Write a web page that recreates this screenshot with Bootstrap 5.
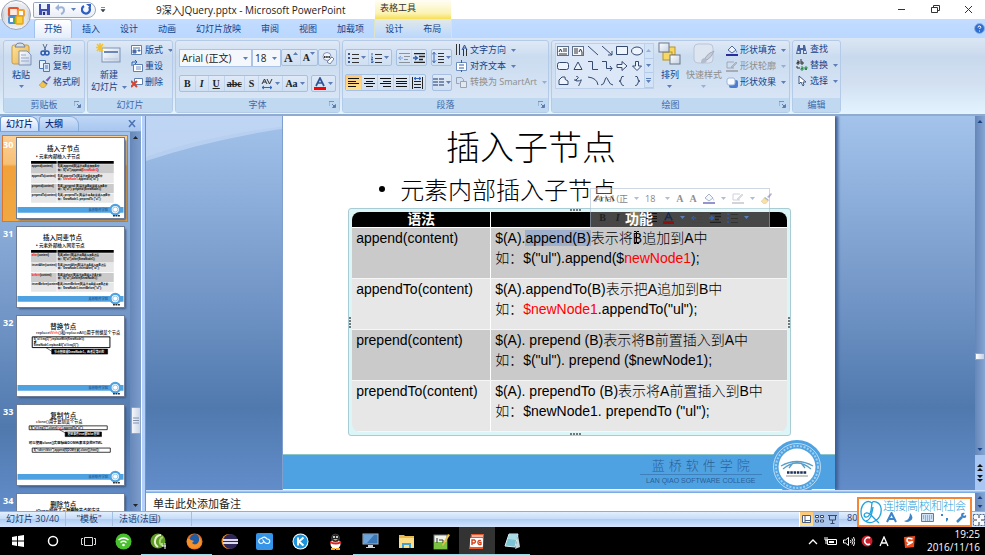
<!DOCTYPE html>
<html lang="zh-CN">
<head>
<meta charset="utf-8">
<meta name="viewport" content="width=device-width, initial-scale=1">
<title>9深入JQuery.pptx - Microsoft PowerPoint</title>
<link href="https://cdn.jsdelivr.net/npm/bootstrap@5.3.0/dist/css/bootstrap.min.css" rel="stylesheet">
<style>
:root{--ui:"Open Sans","Noto Sans CJK SC",sans-serif;--navy:#15428b;--line:#8db2e3}
body{font-family:var(--ui);font-size:9px;line-height:12px;color:var(--navy);height:100vh;overflow:hidden;background:#bfdbff}
svg{display:block;flex:none}
.btn{--bs-btn-padding-x:0;--bs-btn-padding-y:0;--bs-btn-font-size:9px;--bs-btn-line-height:12px;--bs-btn-border-width:0;--bs-btn-border-radius:2px;--bs-btn-color:var(--navy);--bs-btn-disabled-color:#8d8d8d;--bs-btn-disabled-opacity:1;white-space:nowrap;font-family:inherit}
.minh0{min-height:0}.minw0{min-width:0}
/* title bar */
.titlebar{height:19px;background:#fff;color:#222;flex:none}
.orb{position:absolute;left:0;top:0;z-index:5}
.quick{margin-left:33px;width:63px;height:16px;border:1px solid #9aa7ba;border-radius:2px 9px 9px 2px;background:linear-gradient(#fff,#e9eef6);padding:0 5px;gap:5px}
.doctitle{margin-left:50px;width:219px;font-size:10px;color:#222}
.ctx{width:76px;height:19px;padding:2px 5px;color:#333;background:linear-gradient(#fffef6,#fbf3b4 70%,#f7df54)}
.wins{gap:22px;padding-right:11px}
/* tabs */
.tabs{height:19px;padding-left:34px;background:linear-gradient(#c3dcff,#bad7ff);flex:none}
.tabs .btn{padding:0 10px;height:19px;border-radius:3px 3px 0 0}
.tabs .on{background:linear-gradient(#fff,#e3eefb);border:1px solid #a3c2ea;border-bottom:0;padding:0 9px;color:#15428b}
.ctxtabs{background:linear-gradient(#e2e9e8,#bad7ff);border-left:1px solid #dbe3c8;border-right:1px solid #dbe3c8}
/* ribbon */
.ribbon{height:78px;padding:2px 3px 1px;gap:2px;background:linear-gradient(#dbe6f4,#c9d9ed 25%,#d2e0f1 60%,#e3f4ff);border-bottom:2px solid #8fabd0;flex:none}
.grp{border:1px solid #b3cbe8;border-radius:3px;background:linear-gradient(#dfe9f6,#cbdcf0 22%,#d5e3f4 70%,#dbe8f7);overflow:hidden;flex:none}
.grp>.body{flex:1;padding:0 3px}
.grp>.body.pad2{padding:0 2px}
.cap{height:14px;background:#c1d8f1;color:#3e6aaa;line-height:14px;text-align:center;position:relative}
.cap svg{position:absolute;right:3px;top:3px}
.g1{width:82px}.g2{width:86px}.g3{width:165px}.g4{width:207px}.g5{width:239px}.g6{width:49px}
.a5{width:5px;height:3px;color:#5c7fb8}
.small-col{padding-top:1px}
.small-col .btn{height:16px;gap:2px;display:flex;align-items:center}
.small-col .a5{margin-left:3px}
.big{display:flex;flex-direction:column;align-items:center;padding-top:1px}
.big .btn-t{line-height:12px;padding-top:3px}
.big .arr{margin-top:4px}
.bgp{border:1px solid #a5c0e3;border-radius:2px;height:17px;background:linear-gradient(#dfe9f7,#cfdff2)}
.bgp .btn{height:15px;padding:0 2px;border-radius:0;border-right:1px solid #c0d3ec;display:flex;align-items:center;justify-content:center;gap:2px;flex:1}
.bgp .btn:last-child{border-right:0}
.hot{background:linear-gradient(#fcc87a,#ffe08a)}
.rows{gap:8px}
.grp>.rows,.grp .body>.rows{padding-top:8px}
.ff{height:18px;border:1px solid #abc4e6;background:#f4f8fd;border-radius:0;color:#222;font-size:10px;line-height:14px;padding:1px 2px;appearance:none;background-image:none}
.ffname{width:73px}.ffsize{width:29px}
.selw{position:relative}.selw svg{position:absolute;right:4px;top:8px;pointer-events:none}
.gal{width:99px;height:46px;border:1px solid #bcd0ea;background:#dce8f7;margin-top:2px}
.gal .cells{display:grid;grid-template-columns:repeat(6,1fr);flex:1}
.gal .cells .btn{display:flex;align-items:center;justify-content:center}
.gal .rail{width:9px;border-left:1px solid #bcd0ea}
.gal .rail .btn{flex:1;display:flex;align-items:center;justify-content:center;background:#d3e3f7;border-bottom:1px solid #b3cbe8;border-radius:0}
.serif,.bgp .serif{font-family:"Liberation Serif",serif;font-weight:700;font-size:10px;color:#222;line-height:12px}
.bgp .serif.lg{font-size:12px;gap:0}
.bgp .serif.sm{font-size:10px;gap:0}
/* work area */
.blue{background:linear-gradient(#a3c3eb,#7094c5 50%,#5079ae 78%,#628dc9)}
.left{width:141px}
.ltabs{height:16px;background:linear-gradient(#bfd7f7,#a9c6ef);border-bottom:1px solid #7fa5d8}
.ltabs .btn{height:15px;padding:0 5px;color:#0b2a78;border-radius:3px 9px 0 0;font-weight:500}
.ltabs .on{background:linear-gradient(#fff,#c7dcfa);border:1px solid #6f99d3;border-bottom:0}
.ltabs .off{background:linear-gradient(#d4e4fb,#a8c6f0);border:1px solid #89add9;border-bottom:0;padding-right:15px}
.thumbs{padding:3px 0 0 2px;gap:2px;overflow:hidden}
.th{width:126px;height:87px;padding:2px 0 0;border:1px solid transparent;flex:none;--bs-btn-color:#fff;display:flex;align-items:flex-start;border-radius:0;text-align:left}
.th .no{width:14px;line-height:14px;font-size:9px;font-weight:700;color:#fff}
.th svg{background:#fff;outline:1px solid #6d7c94;box-shadow:2px 2px 2px #3c567f}
.th.sel{background:linear-gradient(#fbcf95,#f7c076 33%,#f0a13a 36%,#f1a842);border:1px solid #d9762a}
.sb{width:11px;background:linear-gradient(90deg,#6688b9,#7c9dcc);flex:none}
.sb .thumbbar{width:10px;height:27px;margin-top:264px;background:linear-gradient(90deg,#f4f7fc,#ccd6e8);border:1px solid #8fa3c4;border-radius:1px}
.split{width:5px;background:linear-gradient(90deg,#fff 1px,#b2d0fa 1px,#b2d0fa 4px,#6c94cc 4px)}
.stage{position:relative;overflow:hidden;padding-right:4px}
.swoosh{position:absolute;left:0;top:0}
.slide{width:67%;position:relative;background:#fff;color:#000;z-index:1;box-shadow:3px 0 3px #3d5f95;border-left:1px solid #7f9fce;overflow:hidden}
.slide h1{font-family:"Noto Sans CJK SC",sans-serif;font-weight:300;font-size:34px;line-height:42px;text-align:center;padding:9px 56px 0 0;margin:0}
.slide h2{font-family:"Noto Sans CJK SC",sans-serif;font-weight:300;font-size:24px;line-height:30px;margin:7px 0 4px;padding-left:96px;gap:15px}
.dot{width:6px;height:6px;border-radius:50%;background:#000}
.frame{margin:0 44px 0 65px;padding:3px;border:1px solid #a9ccd4;background:#dcf5f7;border-radius:3px;position:relative}
.frame table{margin:0;width:100%;font-family:"Liberation Sans","Noto Sans CJK SC",sans-serif;font-size:14px;line-height:20px;color:#000;border-collapse:separate;border-spacing:0;table-layout:fixed;border-radius:8px;overflow:hidden}
.frame th{height:16px;padding:0;background:#000;color:#fff;text-align:center;line-height:15px;border:0;border-bottom:1px solid #fff}
.frame th span{position:relative;z-index:3}
.frame td{height:51px;padding:0 0 0 4px;vertical-align:top;border:0;border-bottom:1px solid #f6f6f6;background:#cacaca;white-space:nowrap;font-weight:400}
.frame tr:nth-child(even) td{background:#e7e7e7}
.frame th:first-child,.frame td:first-child{width:139px;border-right:1px solid #fff}
.han{font-weight:300}
.red{color:#f00}
.pick{background:#9fb0cc}
.grip{position:absolute;width:12px;height:2px;background:repeating-linear-gradient(90deg,#777 0 2px,transparent 2px 3px);left:50%}
.gripv{position:absolute;width:2px;height:12px;background:repeating-linear-gradient(#777 0 2px,transparent 2px 3px);top:48%}
.foot{background:#4fa2e2;height:35px;margin-bottom:1px;border-top:1px solid #8cc6c9;color:#2c5e94;text-align:center;padding-right:73px}
.foot .cn{font-size:13px;line-height:19px;border-bottom:1px solid #3f80bd;padding:0 12px;font-family:"Noto Sans CJK SC",sans-serif;font-weight:300;display:flex;gap:4px}
.foot .en{font-family:"Liberation Sans",sans-serif;font-size:7px;line-height:11px}
.seal{position:absolute;right:10px;bottom:-5px}
.mini{position:absolute;left:307px;top:72px;width:180px;height:40px;background:rgba(255,255,255,.28);border:1px solid rgba(160,175,200,.5);z-index:2;white-space:nowrap}
.mini>div{height:19px;gap:6px;padding:0 4px}
.mini .hot{width:15px;height:14px;opacity:.35}
.caret{position:absolute;left:350px;top:115px}
.vs{width:10px;background:linear-gradient(90deg,#6486b8,#86a5d2);flex:none}
.vs .track{flex:1;padding-top:230px}
.vs .knob{height:7px;background:linear-gradient(90deg,#fff,#c3d0e6);border:1px solid #8da2c6}
.vs .nav2{background:#a7c6f2;height:35px}
.notes{height:18px;background:#fff;border:0;resize:none;font-size:11px;line-height:16px;padding:3px 7px 0;color:#111;border-radius:0;overflow:hidden;flex:1;font-family:var(--ui)}
.notes::placeholder{color:#222;opacity:1}
.hsplit{height:3px;background:linear-gradient(#e7f1ff,#b0cffb 1px,#6b9edc)}
/* status bar */
.status{height:16px;background:linear-gradient(#e3effe,#c5dcf8 45%,#aecdf5 50%,#d4e5fb);border-top:1px solid #93acd0;color:#1c3c72}
.status .cell{border-right:1px solid #a3bfe4;height:14px;line-height:14px}
.c1{width:66px;padding-left:6px}.c2{width:47px;text-align:center}.c3{width:79px;padding-left:6px}.zoomv{width:134px}
.views{border-left:1px solid #fff;background:#a9c4ea}
.views .btn{width:13px;height:14px;display:flex;align-items:center;justify-content:center;border-radius:0}
.ime{position:absolute;right:13px;bottom:28px;width:115px;height:30px;border:2px solid #f58733;background:#fff;z-index:6}
.ime .words{font-size:11px;line-height:13px;color:#1da0dc;font-weight:300}
.ime .words span+span{border-left:1px solid #a8d8ee}
/* task bar */
.task{height:28px;background:#000;color:#fff}
.apps{width:530px}
.apps .btn{flex:1;display:flex;align-items:center;justify-content:center;border-radius:0;height:28px}
.apps .run{box-shadow:inset 0 -1px #9adbe8}
.apps .cur{background:#333}
.tray{gap:6px;padding-right:5px}
.clock{font-size:10px;text-align:right;width:58px}
.clock div{line-height:13px}
</style>
<script src="https://cdn.jsdelivr.net/npm/bootstrap@5.3.0/dist/js/bootstrap.bundle.min.js"></script>
</head>
<body class="d-flex flex-column m-0 position-relative">
<svg width="0" height="0" class="position-absolute" aria-hidden="true">
<defs>
<linearGradient id="gOrb" x1="0" y1="0" x2="0" y2="1"><stop offset="0" stop-color="#fff"/><stop offset=".5" stop-color="#c8ccd4"/><stop offset="1" stop-color="#f3f5f8"/></linearGradient>
<linearGradient id="gPage" x1="0" y1="0" x2="1" y2="1"><stop offset="0" stop-color="#fff"/><stop offset="1" stop-color="#c3d0e4"/></linearGradient>
<linearGradient id="gBrown" x1="0" y1="0" x2="1" y2="1"><stop offset="0" stop-color="#fce29b"/><stop offset="1" stop-color="#eab44e"/></linearGradient>
<symbol id="arr" viewBox="0 0 5 3"><path d="M0 0h5L2.500 3z" fill="currentColor"/></symbol>
<symbol id="up" viewBox="0 0 5 3"><path d="M0 3h5L2.500 0z" fill="currentColor"/></symbol>
<symbol id="launch" viewBox="0 0 7 7"><path d="M0 5V.5h5" fill="none" stroke="#7693bd"/><path d="M3 3l3 3M6.500 3.500v3h-3z" stroke="#5b7db2" fill="#5b7db2"/></symbol>
<symbol id="bul" viewBox="0 0 11 10"><path d="M0 0h2v2H0zM0 4h2v2H0zM0 8h2v2H0z" fill="#36528f"/><path d="M4 1.500h7M4 5.500h7M4 9.500h7" stroke="#333"/></symbol>
<symbol id="num" viewBox="0 0 11 10"><path d="M1 0v2.500M0 4h1.500v1L0 6.500h2M0 8h2v1.500H0" stroke="#3b68b4" fill="none"/><path d="M4 1.500h7M4 5.500h7M4 9.500h7" stroke="#333"/></symbol>
<symbol id="ind" viewBox="0 0 12 10"><path d="M1 .5h11M6 3.500h6M6 6.500h4M1 9.500h11" stroke="#222" stroke-width="1.300"/><path d="M0 5h4M2 3l2.500 2L2 7" fill="none" stroke="#2f62b5" stroke-width="1.300"/></symbol>
<symbol id="outd" viewBox="0 0 12 10"><path d="M1 .5h11M6 3.500h6M6 6.500h4M1 9.500h11" stroke="#444"/><path d="M5 5H1M3 3L.5 5 3 7" fill="none" stroke="#2f62b5"/></symbol>
<symbol id="al" viewBox="0 0 11 9"><path d="M0 .5h11M0 3.500h8M0 5.500h11M0 8.500h8" stroke="#111"/></symbol>
<symbol id="ac" viewBox="0 0 11 9"><path d="M0 .5h11M2 3.500h7M0 5.500h11M2 8.500h7" stroke="#111"/></symbol>
<symbol id="ar" viewBox="0 0 11 9"><path d="M0 .5h11M3 3.500h8M0 5.500h11M3 8.500h8" stroke="#111"/></symbol>
<symbol id="aj" viewBox="0 0 11 9"><path d="M0 .5h11M0 3.500h11M0 5.500h11M0 8.500h11" stroke="#111"/></symbol>
<symbol id="brush" viewBox="0 0 11 11"><path d="M6 4l4-4 1 1-3 4z" fill="#7a5fb5"/><path d="M4 4l4 3-1 1-4-3z" fill="#4a69a8"/><path d="M3 5l4 3c-1 2-3 3-4 3L0 8c1 0 2-1 3-3z" fill="#f1c44c" stroke="#b98a28" stroke-width=".5"/></symbol>
<symbol id="bucket" viewBox="0 0 12 11"><path d="M2 5l4-4 4 4-4 3z" fill="#eef3fb" stroke="#4c6a9a"/><path d="M10 5q2 2 1 3q-1-1-1-3" fill="#4c7cc8"/><path d="M0 9h12v2H0z" fill="#2b2ba0"/></symbol>
<symbol id="pen" viewBox="0 0 12 11"><path d="M1 1h7M1 1v6h7" fill="none" stroke="#a0a8b5"/><path d="M5 6l5-5 1 1-5 5z" fill="#b8bec8" stroke="#8b94a3" stroke-width=".5"/><path d="M0 9h12v2H0z" fill="#a6abb5"/></symbol>
<symbol id="sfoot" viewBox="0 0 556 418"><path d="M0 360h556v30H0z" fill="#4fa2e2"/><text x="372" y="382" font-size="17" fill="#2c5e94" font-family="Noto Sans CJK SC">蓝桥软件学院</text><circle cx="512" cy="374" r="25" fill="#fff" stroke="#4fa2e2" stroke-width="12"/><circle cx="512" cy="374" r="13" fill="none" stroke="#76b5e4" stroke-width="4"/><path d="M500 406h36" stroke="#333" stroke-width="8" stroke-dasharray="10 3"/></symbol>
</defs>
</svg>

<!-- office button -->
<button class="btn orb" aria-label="Office"><svg width="31" height="31" viewBox="0 0 31 31"><circle cx="16" cy="15" r="14.500" fill="url(#gOrb)" stroke="#9aa5b6"/><circle cx="16" cy="15" r="12" fill="#e6e8ec" opacity=".7"/><rect x="9" y="8" width="9" height="8" rx="1" fill="#fbe9e2" stroke="#e3562b" stroke-width="2.200"/><rect x="18" y="10" width="6" height="6" rx="1" fill="#fff" stroke="#f4a02c" stroke-width="2"/><rect x="9" y="17" width="7" height="6" rx="1" fill="#fff" stroke="#4a8fd6" stroke-width="2"/><rect x="16" y="16" width="7" height="8" rx="1" fill="#f7d03c" stroke="#e5a51f" stroke-width="1.500"/><path d="M14 18v5" stroke="#66ad3c" stroke-width="2"/></svg></button>

<header class="titlebar d-flex align-items-center">
  <div class="quick d-flex align-items-center">
    <button class="btn" aria-label="保存"><svg width="11" height="11" viewBox="0 0 11 11"><path d="M0 0h11v11H0z" fill="#3e4fb0"/><path d="M2 0h6v5H2z" fill="#eaf2fd"/><path d="M3 7h5v4H3z" fill="#c7d1ee"/><path d="M4 8h2v3H4z" fill="#2a2f80"/></svg></button>
    <button class="btn" aria-label="撤消"><svg width="11" height="11" viewBox="0 0 11 11"><path d="M3 4q6-2 6 2q0 3-3 4" fill="none" stroke="#9db3d6" stroke-width="2"/><path d="M0 4l4-4v7z" fill="#9db3d6"/></svg></button>
    <svg class="a5"><use href="#arr"/></svg>
    <button class="btn" aria-label="恢复"><svg width="11" height="11" viewBox="0 0 11 11"><path d="M3 2a4 4 0 1 0 5 1" fill="none" stroke="#2f5fc4" stroke-width="2.300"/><path d="M5 0h5v4z" fill="#2f5fc4"/></svg></button>
  </div>
  <button class="btn ms-1" aria-label="自定义"><svg width="6" height="6" viewBox="0 0 6 6"><path d="M1 .5h4M1 2.500h4L3 5z" stroke="#345" fill="#345" stroke-width=".6"/></svg></button>
  <div class="doctitle text-nowrap">9深入JQuery.pptx - Microsoft PowerPoint</div>
  <div class="ctx">表格工具</div>
  <div class="wins d-flex align-items-center ms-auto">
    <button class="btn" aria-label="最小化"><svg width="11" height="11" viewBox="0 0 11 11"><path d="M1 5.500h7" stroke="#333"/></svg></button>
    <button class="btn" aria-label="还原"><svg width="11" height="11" viewBox="0 0 11 11"><path d="M3.500 3.500V1.500h6v5h-2M1.500 3.500h6v5h-6z" fill="none" stroke="#333"/></svg></button>
    <button class="btn" aria-label="关闭"><svg width="11" height="11" viewBox="0 0 11 11"><path d="M2 2l7 7M9 2l-7 7" stroke="#333"/></svg></button>
  </div>
</header>

<nav class="tabs d-flex">
  <button class="btn on">开始</button><button class="btn">插入</button><button class="btn">设计</button><button class="btn">动画</button><button class="btn">幻灯片放映</button><button class="btn">审阅</button><button class="btn">视图</button><button class="btn">加载项</button>
  <div class="ctxtabs d-flex"><button class="btn">设计</button><button class="btn">布局</button></div>
  <button class="btn ms-auto px-0" aria-label="帮助"><svg width="11" height="11" viewBox="0 0 11 11"><circle cx="5.500" cy="5.500" r="5" fill="#2f6ed0" stroke="#8fb4e8"/><path d="M4 4.500q0-2 2-1.500q2 1-.5 3M5.500 7.500v1" fill="none" stroke="#fff"/></svg></button>
</nav>

<section class="ribbon d-flex">
  <!-- clipboard -->
  <div class="grp g1 d-flex flex-column"><div class="body d-flex">
    <button class="btn big me-1"><svg width="28" height="24" viewBox="0 0 28 24"><rect x="5" y="3" width="17" height="19" rx="2" fill="url(#gBrown)" stroke="#c89a4a"/><path d="M9 3q0-2 4-2t4 2l1 2H8z" fill="#d9dfe9" stroke="#77839a"/><path d="M12 9h8l4 4v10H12z" fill="url(#gPage)" stroke="#7d93b8"/><path d="M14 13h5M14 16h8M14 19h8" stroke="#93a9cc"/></svg><span class="btn-t">粘贴</span><svg class="arr a5"><use href="#arr"/></svg></button>
    <div class="small-col">
      <button class="btn"><svg width="12" height="12" viewBox="0 0 12 12"><path d="M4 0l3 7M8 0L5 7" stroke="#5c6f90"/><circle cx="4" cy="9" r="2" fill="none" stroke="#2c5cb0" stroke-width="1.500"/><circle cx="8" cy="9" r="2" fill="none" stroke="#2c5cb0" stroke-width="1.500"/></svg>剪切</button>
      <button class="btn"><svg width="12" height="12" viewBox="0 0 12 12"><path d="M.5.500h6v8h-6z" fill="#eaf2fd" stroke="#4e77ba"/><path d="M4.500 3.500h6v8h-6z" fill="#d8e6fa" stroke="#4e77ba"/><path d="M6 6h3M6 8h3" stroke="#4e77ba"/></svg>复制</button>
      <button class="btn"><svg width="12" height="12"><use href="#brush"/></svg>格式刷</button>
    </div></div>
    <div class="cap">剪贴板<svg width="7" height="7"><use href="#launch"/></svg></div>
  </div>
  <!-- slides -->
  <div class="grp g2 d-flex flex-column"><div class="body d-flex">
    <button class="btn big me-1"><svg width="28" height="24" viewBox="0 0 28 24"><rect x="7" y="6" width="18" height="14" fill="url(#gPage)" stroke="#7d93b8"/><path d="M9 10h14" stroke="#6a86b5" stroke-width="2"/><path d="M9 17h14" stroke="#b9c7de"/><path d="M5 1v9M1 5.500h9M2 2l6 7M8 2L2 9" stroke="#f4c22c" stroke-width="1.500"/></svg><span class="btn-t">新建</span><span class="d-flex align-items-center gap-1">幻灯片<svg class="a5"><use href="#arr"/></svg></span></button>
    <div class="small-col">
      <button class="btn"><svg width="12" height="12" viewBox="0 0 12 12"><path d="M.5 1.500h10v9H.500z" fill="#fff" stroke="#5f7fae"/><path d="M2 4h7M2 6h3v3H2zM7 6h2v1H7z" stroke="#4a6da8" fill="#4a6da8"/></svg>版式<svg class="a5"><use href="#arr"/></svg></button>
      <button class="btn"><svg width="12" height="12" viewBox="0 0 12 12"><path d="M2.500 4.500h9v7h-9z" fill="#fff" stroke="#5f7fae"/><path d="M5 7h5M5 9h5" stroke="#6d8fc4"/><path d="M1 6V2h5M4 0l2 2-2 2" fill="none" stroke="#2d62ba"/></svg>重设</button>
      <button class="btn"><svg width="12" height="12" viewBox="0 0 12 12"><path d="M3.500 2.500h8v6h-8z" fill="#fff" stroke="#5f7fae"/><path d="M0 5l6 6M6 5l-6 6" stroke="#d9442d" stroke-width="2"/></svg>删除</button>
    </div></div>
    <div class="cap">幻灯片</div>
  </div>
  <!-- font -->
  <div class="grp g3 d-flex flex-column"><div class="body rows d-flex flex-column">
    <div class="d-flex justify-content-between">
      <div class="d-flex"><span class="selw"><select class="ff ffname" aria-label="字体"><option>Arial (正文)</option></select><svg class="a5"><use href="#arr"/></svg></span><span class="selw"><select class="ff ffsize" aria-label="字号"><option>18</option></select><svg class="a5"><use href="#arr"/></svg></span></div>
      <div class="bgp d-flex"><button class="btn serif lg" aria-label="增大字号">A<svg class="a5 mb-2"><use href="#up"/></svg></button><button class="btn serif sm" aria-label="减小字号">A<svg class="a5 mb-2"><use href="#arr"/></svg></button></div>
      <div class="bgp d-flex"><button class="btn" aria-label="清除格式"><svg width="13" height="12" viewBox="0 0 13 12"><circle cx="6" cy="4.500" r="4" fill="#f4f7fc" stroke="#8495b5"/><path d="M3 5h6" stroke="#333" stroke-width="2" stroke-dasharray="1.500 .7"/><path d="M6 10l5-5 2 2-4 5z" fill="#fff" stroke="#7183a5"/></svg></button></div>
    </div>
    <div class="d-flex justify-content-between">
      <div class="bgp d-flex"><button class="btn serif px-1">B</button><button class="btn serif px-1"><i>I</i></button><button class="btn serif px-1"><u>U</u></button><button class="btn serif"><s>abc</s></button><button class="btn serif px-1">S</button><button class="btn" aria-label="字符间距"><svg width="12" height="12" viewBox="0 0 12 12"><path d="M1 6l2.500-5L6 6M2 4h3M6 1l2.500 5L11 1" fill="none" stroke="#333"/><path d="M1 9.500h10M3 8L1 9.500 3 11M9 8l2 1.500L9 11" fill="none" stroke="#2e66c0"/></svg><svg class="a5"><use href="#arr"/></svg></button><button class="btn serif">Aa<svg class="a5"><use href="#arr"/></svg></button></div>
      <div class="bgp d-flex"><button class="btn" aria-label="字体颜色"><svg width="12" height="13" viewBox="0 0 12 13"><path d="M2 9l4-8 4 8M4 6h4" fill="none" stroke="#2f5496" stroke-width="1.700"/><path d="M0 10h12v3H0z" fill="#f00"/></svg><svg class="a5"><use href="#arr"/></svg></button></div>
    </div></div>
    <div class="cap">字体<svg width="7" height="7"><use href="#launch"/></svg></div>
  </div>
  <!-- paragraph -->
  <div class="grp g4 d-flex flex-column"><div class="body pad2 d-flex">
    <div class="rows d-flex flex-column">
      <div class="d-flex gap-1">
        <div class="bgp d-flex"><button class="btn" aria-label="项目符号"><svg width="11" height="10"><use href="#bul"/></svg><svg class="a5"><use href="#arr"/></svg></button><button class="btn" aria-label="编号"><svg width="11" height="10"><use href="#num"/></svg><svg class="a5"><use href="#arr"/></svg></button></div>
        <div class="bgp d-flex"><button class="btn px-0 opacity-50" aria-label="减少缩进"><svg class="mx-auto" width="14" height="10"><use href="#outd"/></svg></button><button class="btn px-0" aria-label="增加缩进"><svg width="14" height="10"><use href="#ind"/></svg></button></div>
        <div class="bgp d-flex"><button class="btn px-0" aria-label="行距"><svg width="12" height="11" viewBox="0 0 12 11"><path d="M2 0v11M0 2.500L2 .5l2 2M0 8.500l2 2 2-2" fill="none" stroke="#2f62b5"/><path d="M6 1.500h6M6 4.500h6M6 7.500h6M6 10.500h6" stroke="#333"/></svg><svg class="a5"><use href="#arr"/></svg></button></div>
      </div>
      <div class="d-flex justify-content-between">
        <div class="bgp d-flex"><button class="btn hot" aria-label="左对齐"><svg width="11" height="9"><use href="#al"/></svg></button><button class="btn" aria-label="居中"><svg width="11" height="9"><use href="#ac"/></svg></button><button class="btn" aria-label="右对齐"><svg width="11" height="9"><use href="#ar"/></svg></button><button class="btn" aria-label="两端对齐"><svg width="11" height="9"><use href="#aj"/></svg></button><button class="btn" aria-label="分散对齐"><svg width="11" height="12" viewBox="0 0 11 12"><path d="M.5 0v12M10.500 0v12M2 4.500h7M2 7.500h7M2 10.500h7" stroke="#222"/><path d="M2 1.500h7M4 0L2 1.500 4 3M7 0l2 1.500L7 3" fill="none" stroke="#2f62b5"/></svg></button></div>
        <div class="bgp d-flex"><button class="btn px-0" aria-label="分栏"><svg width="11" height="9" viewBox="0 0 11 9"><path d="M0 1h5M0 4h5M0 7h5M6 1h5M6 4h5M6 7h5" stroke="#5c6f94" stroke-width="1.500"/></svg><svg class="a5"><use href="#arr"/></svg></button></div>
      </div>
    </div>
    <div class="small-col ms-1">
      <button class="btn"><svg width="12" height="12" viewBox="0 0 12 12"><path d="M.5 0v11M3.500 0v11M7.500 5v7" stroke="#333"/><path d="M6 6l2.500-5L11 6M7 4h3" fill="none" stroke="#27509a"/><path d="M10.500 5v7" stroke="#333"/></svg>文字方向<svg class="a5"><use href="#arr"/></svg></button>
      <button class="btn"><svg width="12" height="12" viewBox="0 0 12 12"><path d="M.5 2.500h10v8H.500z" fill="#fff" stroke="#6f8fc0"/><path d="M3 5h5M3 8h5" stroke="#2c5cb0"/><path d="M5.500 0v3M5.500 10v2" stroke="#2c5cb0"/></svg>对齐文本<svg class="a5"><use href="#arr"/></svg></button>
      <button class="btn" disabled><svg width="12" height="12" viewBox="0 0 12 12"><path d="M.5 1.500h5l2 2v3M.500 1.500v6h3" fill="none" stroke="#98a3b5"/><path d="M4.500 5.500h6v6h-6z" fill="#e3e7ee" stroke="#98a3b5"/></svg>转换为 SmartArt<svg class="a5 opacity-50"><use href="#arr"/></svg></button>
    </div></div>
    <div class="cap">段落<svg width="7" height="7"><use href="#launch"/></svg></div>
  </div>
  <!-- drawing -->
  <div class="grp g5 d-flex flex-column"><div class="body d-flex gap-1">
    <div class="gal d-flex"><div class="cells">
      <button class="btn" aria-label="文本框"><svg width="12" height="10" viewBox="0 0 12 10"><rect x=".5" y=".5" width="11" height="9" fill="#f5f8fd" stroke="#5d7090"/><path d="M2 6l1.500-3L5 6M6 3h4M6 5h4M2 8h8" stroke="#333" fill="none"/></svg></button>
      <button class="btn" aria-label="竖排文本框"><svg width="12" height="10" viewBox="0 0 12 10"><rect x=".5" y=".5" width="11" height="9" fill="#f5f8fd" stroke="#5d7090"/><path d="M3 2v6M5 2v6M7 6l1.500-3L10 6v3" stroke="#333" fill="none"/></svg></button>
      <button class="btn" aria-label="直线"><svg width="12" height="10" viewBox="0 0 12 10"><path d="M1 0l10 9" stroke="#34496f"/></svg></button>
      <button class="btn" aria-label="箭头"><svg width="12" height="10" viewBox="0 0 12 10"><path d="M1 0l10 9M11 5v4H7" stroke="#34496f" fill="none"/></svg></button>
      <button class="btn" aria-label="矩形"><svg width="12" height="10" viewBox="0 0 12 10"><path d="M.5.500h11v8H.500z" stroke="#34496f" fill="#eef4fd"/></svg></button>
      <button class="btn" aria-label="椭圆"><svg width="12" height="10" viewBox="0 0 12 10"><ellipse cx="6" cy="5" rx="5.500" ry="4" stroke="#34496f" fill="#eef4fd"/></svg></button>
      <button class="btn" aria-label="圆角矩形"><svg width="12" height="10" viewBox="0 0 12 10"><rect x=".5" y="1.500" width="11" height="7" rx="2" stroke="#34496f" fill="#eef4fd"/></svg></button>
      <button class="btn" aria-label="三角形"><svg width="12" height="10" viewBox="0 0 12 10"><path d="M2 8.500L6 1l4 7.500z" stroke="#34496f" fill="#eef4fd"/></svg></button>
      <button class="btn" aria-label="肘形"><svg width="12" height="10" viewBox="0 0 12 10"><path d="M1 .5h4.500v8H11" stroke="#34496f" fill="none"/></svg></button>
      <button class="btn" aria-label="肘形箭头"><svg width="12" height="10" viewBox="0 0 12 10"><path d="M1 .5h4.500v7H11M9 5l2 2.500L9 10" stroke="#34496f" fill="none"/></svg></button>
      <button class="btn" aria-label="右箭头"><svg width="12" height="10" viewBox="0 0 12 10"><path d="M1 3.500h5v-3l5 4.500-5 4.500v-3H1z" stroke="#34496f" fill="#eef4fd"/></svg></button>
      <button class="btn" aria-label="下箭头"><svg width="12" height="10" viewBox="0 0 12 10"><path d="M4.500.500h3V5h3L6 9.500 1.500 5h3z" stroke="#34496f" fill="#eef4fd"/></svg></button>
      <button class="btn" aria-label="任意多边形"><svg width="12" height="10" viewBox="0 0 12 10"><path d="M2 8.500V4l3-3h3q-1 3 3 4v3.500z" stroke="#34496f" fill="#eef4fd"/></svg></button>
      <button class="btn" aria-label="自由曲线"><svg width="12" height="10" viewBox="0 0 12 10"><path d="M4 0q4 1 1 3t0 2 4-1-1 3-1 3M2 4h3" stroke="#34496f" fill="none"/></svg></button>
      <button class="btn" aria-label="弧形"><svg width="12" height="10" viewBox="0 0 12 10"><path d="M1 1q9 1 10 8" stroke="#34496f" fill="none"/></svg></button>
      <button class="btn" aria-label="曲线"><svg width="12" height="10" viewBox="0 0 12 10"><path d="M0 9Q3 9 4 4t3 0 5 5" stroke="#34496f" fill="none"/></svg></button>
      <button class="btn" aria-label="左大括号"><svg width="12" height="10" viewBox="0 0 12 10"><path d="M8 0Q5 0 5 3T3 5q2 0 2 2t3 3" stroke="#34496f" fill="none"/></svg></button>
      <button class="btn" aria-label="右大括号"><svg width="12" height="10" viewBox="0 0 12 10"><path d="M4 0q3 0 3 3t2 2q-2 0-2 2t-3 3" stroke="#34496f" fill="none"/></svg></button>
    </div><div class="rail d-flex flex-column"><button class="btn" aria-label="上"><svg class="a5 opacity-50"><use href="#up"/></svg></button><button class="btn" aria-label="下"><svg class="a5"><use href="#arr"/></svg></button><button class="btn" aria-label="更多"><svg width="5" height="5" viewBox="0 0 5 5"><path d="M0 0h5v1H0zM0 2h5L2.500 5z" fill="#5c7fb8"/></svg></button></div></div>
    <button class="btn big"><svg width="24" height="24" viewBox="0 0 24 24"><rect x="9" y="5" width="8" height="8" fill="#f8d862" stroke="#b9932b"/><rect x="5" y="10" width="9" height="8" fill="#f8d862" stroke="#b9932b"/><rect x="1" y="1" width="10" height="9" fill="url(#gPage)" stroke="#6b7686"/><rect x="12" y="13" width="10" height="9" fill="url(#gPage)" stroke="#6b7686"/></svg><span class="btn-t">排列</span><svg class="arr a5"><use href="#arr"/></svg></button>
    <button class="btn big" disabled><svg width="24" height="24" viewBox="0 0 24 24"><rect x="2" y="2" width="19" height="19" rx="4" fill="#dde5f1" stroke="#b9c5d8"/><path d="M22 9q-6 2-9 7l2 2q5-3 7-9" fill="#c5ccd8" stroke="#a2acbd"/><path d="M13 16q-4 0-4 5 5 1 6-3z" fill="#b3bccb"/></svg><span class="btn-t">快速样式</span><svg class="arr a5 opacity-50"><use href="#arr"/></svg></button>
    <div class="small-col">
      <button class="btn"><svg width="12" height="11"><use href="#bucket"/></svg>形状填充<svg class="a5"><use href="#arr"/></svg></button>
      <button class="btn" disabled><svg width="12" height="11"><use href="#pen"/></svg>形状轮廓<svg class="a5 opacity-50"><use href="#arr"/></svg></button>
      <button class="btn"><svg width="12" height="11" viewBox="0 0 12 11"><rect x="3" y="3" width="9" height="8" rx="2" fill="#4a7cd0"/><rect x="1" y="1" width="8" height="7" rx="2" fill="#f4f8ff" stroke="#9db4d8"/></svg>形状效果<svg class="a5"><use href="#arr"/></svg></button>
    </div></div>
    <div class="cap">绘图<svg width="7" height="7"><use href="#launch"/></svg></div>
  </div>
  <!-- editing -->
  <div class="grp g6 d-flex flex-column"><div class="body small-col pt-0">
      <button class="btn mt-0"><svg width="12" height="11" viewBox="0 0 12 11"><path d="M2 1h2v3h3V1h2l2 9H7V6H5v4H0z" fill="#4a64a0"/><path d="M1.500 7h2v2h-2zM8 7h2v2H8z" fill="#dce8fa"/></svg>查找</button>
      <button class="btn"><svg width="12" height="12" viewBox="0 0 12 12"><path d="M1 2h2v3H1V3.500h2M5 0v5h2V3H5M1 7v2h3" stroke="#333" fill="none"/><path d="M5 8h2v3H5V9.500h2M11 10.500H9V8h2v1.500H9" stroke="#2b8a4a" fill="none"/></svg>替换<svg class="a5"><use href="#arr"/></svg></button>
      <button class="btn"><svg width="12" height="12" viewBox="0 0 12 12"><path d="M3 1v8l2-2 2 4 1-1-1-3h3z" fill="#fff" stroke="#44597f"/></svg>选择<svg class="a5"><use href="#arr"/></svg></button>
    </div><div class="cap">编辑</div>
  </div>
</section>

<main class="d-flex flex-fill minh0">
  <aside class="left d-flex flex-column minh0 flex-shrink-0">
    <div class="ltabs d-flex align-items-end"><button class="btn on">幻灯片</button><button class="btn off">大纲</button><button class="btn ms-auto" aria-label="关闭窗格"><svg width="8" height="8" viewBox="0 0 8 8"><path d="M1 0l6 7M7 0L1 7" stroke="#4a74b4" stroke-width="1.500"/></svg></button></div>
    <div class="d-flex flex-fill minh0 blue">
      <div class="thumbs d-flex flex-column flex-fill">
        <button class="btn th sel"><span class="no">30</span><svg width="107" height="80" viewBox="0 0 556 418" font-family="Liberation Sans, Noto Sans CJK SC" font-weight="700"><text x="155" y="68" font-size="34" font-weight="500">插入子节点</text><text x="98" y="107" font-size="24" font-weight="500">• 元素内部插入子节点</text><path d="M72 120h432v15H72z"/><path d="M72 137h432v48H72zM72 240h432v48H72z" fill="#cacaca"/><path d="M72 187h432v50H72zM72 290h432v48H72z" fill="#e7e7e7"/><path d="M208 120v218" stroke="#fff" stroke-width="4"/><g font-size="14"><text x="76" y="152">append(content)</text><text x="212" y="152">$(A).append(B)表示将B追加到A中</text><text x="212" y="172">如：$("ul").append(<tspan fill="red">$newNode1</tspan>);</text><text x="76" y="202">appendTo(content)</text><text x="212" y="202">$(A).appendTo(B)表示把A追加到B中</text><text x="212" y="222">如：<tspan fill="red">$newNode1</tspan>.appendTo("ul");</text><text x="76" y="254">prepend(content)</text><text x="212" y="254">$(A). prepend (B)表示将B前置插入到A中</text><text x="212" y="274">如：$("ul"). prepend ($newNode1);</text><text x="76" y="304">prependTo(content)</text><text x="212" y="304">$(A). prependTo (B)表示将A前置插入到B中</text><text x="212" y="324">如：$newNode1. prependTo ("ul");</text></g><use href="#sfoot"/></svg></button>
        <button class="btn th"><span class="no">31</span><svg width="107" height="80" viewBox="0 0 556 418" font-family="Liberation Sans, Noto Sans CJK SC" font-weight="700"><text x="135" y="68" font-size="34" font-weight="500">插入同辈节点</text><text x="98" y="107" font-size="24" font-weight="500">• 元素外部插入同辈节点</text><path d="M72 120h432v15H72z"/><path d="M72 137h432v48H72zM72 240h432v48H72z" fill="#cacaca"/><path d="M72 187h432v50H72zM72 290h432v48H72z" fill="#e7e7e7"/><path d="M208 120v218" stroke="#fff" stroke-width="4"/><g font-size="14"><text x="76" y="152"><tspan fill="red">after</tspan>(content)</text><text x="212" y="152">$(A).after (B)表示将B插入到A之后</text><text x="212" y="172">如：$("ul").after($newNode1);</text><text x="76" y="202">insertAfter(content)</text><text x="212" y="202">$(A).insertAfter(B)表示将A插入到B之后</text><text x="212" y="222">如：$newNode1.insertAfter("ul");</text><text x="76" y="254"><tspan fill="red">before</tspan>(content)</text><text x="212" y="254">$(A).before (B)表示将B插入至A之前</text><text x="212" y="274">如：$("ul").before($newNode1);</text><text x="76" y="304">insertBefore(content)</text><text x="212" y="304">$(A).insertBefore(B)表示将A插入到B之前</text><text x="212" y="324">如：$newNode1.insertBefore("ul");</text></g><use href="#sfoot"/></svg></button>
        <button class="btn th"><span class="no">32</span><svg width="107" height="80" viewBox="0 0 556 418" font-family="Liberation Sans, Noto Sans CJK SC" font-weight="700"><text x="172" y="66" font-size="34" font-weight="500">替换节点</text><text x="98" y="93" font-size="22" font-weight="500">replace<tspan fill="red">With</tspan>()和replaceAll()用于替换某个节点</text><path d="M78 109h406v56H78z" fill="#fff" stroke="#000" stroke-width="5"/><text x="86" y="126" font-size="14">$("ul li:eq(1)").replaceWith($newNode1);</text><text x="86" y="142" font-size="14">或</text><text x="86" y="158" font-size="14">$newNode1.replaceAll("ul li:eq(1)");</text><path d="M150 165l34 22M180 173h292v26H180z" stroke="#000" stroke-width="3"/><text x="192" y="192" font-size="15" fill="#fff">节点替换成$newNode1，两者是等价的</text><use href="#sfoot"/></svg></button>
        <button class="btn th"><span class="no">33</span><svg width="107" height="80" viewBox="0 0 556 418" font-family="Liberation Sans, Noto Sans CJK SC" font-weight="700"><text x="172" y="66" font-size="34" font-weight="500">复制节点</text><text x="98" y="92" font-size="22" font-weight="500">clone()用于复制某个节点</text><path d="M62 109h408v20H62z" fill="#fff" stroke="#000" stroke-width="4"/><text x="70" y="124" font-size="14">$("ul li:eq(1)").clone(<tspan fill="red">true</tspan>).appendTo("ul");</text><path d="M220 129l30 16M250 141h190v24H250z" stroke="#000" stroke-width="3"/><text x="262" y="158" font-size="15" fill="#fff">复制事件true或false复制</text><text x="60" y="205" font-size="18">可以使用clone()实现输出DOM元素本身的HTML</text><path d="M78 225h408v22H78z" fill="#fff" stroke="#000" stroke-width="4"/><text x="86" y="241" font-size="14">$("&lt;div&gt;&lt;/div&gt;").append($(DOM元素).clone()).html();</text><use href="#sfoot"/></svg></button>
        <button class="btn th"><span class="no">34</span><svg width="107" height="80" viewBox="0 0 556 418" font-family="Liberation Sans, Noto Sans CJK SC" font-weight="700"><text x="172" y="66" font-size="34" font-weight="500">删除节点</text><text x="98" y="92" font-size="22">jQuery提供了三种删除节点的方法</text></svg></button>
      </div>
      <div class="sb d-flex flex-column align-items-center"><svg class="a5 my-1 text-dark"><use href="#up"/></svg><div class="thumbbar d-flex flex-column align-items-center justify-content-center"><svg width="6" height="7" viewBox="0 0 6 7"><path d="M0 1h6M0 3.500h6M0 6h6" stroke="#8292af"/></svg></div><svg class="a5 mt-auto mb-1 text-dark"><use href="#arr"/></svg></div>
    </div>
  </aside>
  <div class="split flex-shrink-0"></div>
  <section class="d-flex flex-column flex-fill minh0 minw0">
    <div class="d-flex flex-fill minh0">
      <div class="stage blue flex-fill d-flex justify-content-center">
        <svg class="swoosh" width="280" height="45" viewBox="0 0 280 45"><path d="M0 0h280Q120 5 0 45z" fill="#c9dcf6" opacity=".6"/><path d="M0 0h280Q100 5 0 41z" fill="#c9dcf6" opacity=".35"/></svg>
        <article class="slide d-flex flex-column">
          <h1>插入子节点</h1>
          <h2 class="d-flex align-items-center"><span class="dot"></span>元素内部插入子节点</h2>
          <div class="frame">
            <span class="grip top-0"></span><span class="grip bottom-0"></span><span class="gripv start-0"></span><span class="gripv end-0"></span>
            <table>
              <thead><tr><th>语法</th><th><span>功能</span></th></tr></thead>
              <tbody>
              <tr><td>append(content)</td><td>$(A).<span class="pick">append(B)</span><span class="han">表示将</span>B<span class="han">追加到</span>A<span class="han">中</span><br><span class="han">如：</span>$("ul").append($<span class="red">newNode1</span>);</td></tr>
              <tr><td>appendTo(content)</td><td>$(A).appendTo(B)<span class="han">表示把</span>A<span class="han">追加到</span>B<span class="han">中</span><br><span class="han">如：</span><span class="red">$newNode1</span>.appendTo("ul");</td></tr>
              <tr><td>prepend(content)</td><td>$(A). prepend (B)<span class="han">表示将</span>B<span class="han">前置插入到</span>A<span class="han">中</span><br><span class="han">如：</span>$("ul"). prepend ($newNode1);</td></tr>
              <tr><td>prependTo(content)</td><td>$(A). prependTo (B)<span class="han">表示将</span>A<span class="han">前置插入到</span>B<span class="han">中</span><br><span class="han">如：</span>$newNode1. prependTo ("ul");</td></tr>
              </tbody>
            </table>
          </div>
          <svg class="caret" width="7" height="13" viewBox="0 0 7 13"><path d="M1 .5h2l.5 1 .5-1h2M3.500 1v11M1 12.500h2l.5-1 .5 1h2" fill="none" stroke="#000"/></svg>
          <div class="mini">
            <div class="d-flex align-items-center opacity-50"><span>Arial (正</span><svg class="a5"><use href="#arr"/></svg><span>18</span><svg class="a5 ms-1"><use href="#arr"/></svg><span class="serif">A</span><span class="serif">A</span><svg width="12" height="11"><use href="#bucket"/></svg><svg class="a5"><use href="#arr"/></svg><svg width="12" height="11"><use href="#pen"/></svg><svg class="a5"><use href="#arr"/></svg><svg width="11" height="11"><use href="#brush"/></svg></div>
            <div class="d-flex align-items-center"><span class="serif ms-1">B</span><span class="serif mx-1"><i>I</i></span><span class="hot"></span><svg class="ms-auto" width="11" height="9"><use href="#ar"/></svg><svg width="11" height="12" viewBox="0 0 12 13"><path d="M2 9l4-8 4 8M4 6h4" fill="none" stroke="#1b2b4d" stroke-width="1.700"/><path d="M0 10h12v3H0z" fill="#8e1010"/></svg><svg class="a5"><use href="#arr"/></svg><svg width="12" height="10"><use href="#outd"/></svg><svg width="12" height="10"><use href="#ind"/></svg><svg width="11" height="10"><use href="#bul"/></svg><svg class="a5 me-3"><use href="#arr"/></svg></div>
          </div>
          <footer class="foot mt-auto d-flex flex-column align-items-end"><div class="d-flex flex-column align-items-center"><div class="cn"><span>蓝</span><span>桥</span><span>软</span><span>件</span><span>学</span><span>院</span></div><div class="en">LAN QIAO SOFTWARE COLLEGE</div></div></footer>
          <svg class="seal" width="56" height="56" viewBox="0 0 56 56"><circle cx="28" cy="28" r="27" fill="#4fa2e2"/><circle cx="28" cy="28" r="23.500" fill="none" stroke="#d6ebf9" stroke-width=".8"/><circle cx="28" cy="28" r="21" fill="none" stroke="#9fd0f2" stroke-width="2" stroke-dasharray="2 1.500"/><circle cx="28" cy="28" r="18.500" fill="#fff"/><path d="M12 27q16-9 32 0M14 30q14-12 28 0M20 29l4-5M36 29l-4-5" fill="none" stroke="#5a9fc8" stroke-width="1.300"/><path d="M18 33.500h20" stroke="#1b2f57" stroke-width="2.500" stroke-dasharray="2.500 .8"/><path d="M17 37h22" stroke="#777" stroke-width=".8"/></svg>
        </article>
      </div>
      <div class="vs d-flex flex-column align-items-stretch"><svg class="mx-auto mt-1" width="6" height="3"><use href="#up"/></svg><div class="track"><div class="knob"></div></div><svg class="mx-auto mb-1" width="6" height="3"><use href="#arr"/></svg><div class="nav2 d-flex flex-column align-items-center justify-content-center gap-1"><svg width="6" height="7" viewBox="0 0 6 7"><path d="M0 3h6L3 0zM0 7h6L3 4z" fill="#111"/></svg><svg width="6" height="7" viewBox="0 0 6 7"><path d="M0 0h6L3 3zM0 4h6L3 7z" fill="#111"/></svg></div></div>
    </div>
    <div class="hsplit flex-shrink-0"></div>
    <div class="d-flex flex-shrink-0"><textarea class="notes" rows="1" aria-label="备注" placeholder="单击此处添加备注"></textarea><div class="vs d-flex flex-column align-items-center justify-content-around"><svg width="6" height="3"><use href="#up"/></svg><svg width="6" height="3"><use href="#arr"/></svg></div></div>
  </section>
</main>

<footer class="status d-flex flex-shrink-0">
  <div class="cell c1">幻灯片 30/40</div><div class="cell c2">"模板"</div><div class="cell c3">法语(法国)</div>
  <div class="views d-flex ms-auto"><button class="btn hot" aria-label="普通视图"><svg width="9" height="8" viewBox="0 0 9 8"><path d="M.5.500h8v7h-8zM3 1v7M3 5.500h5" fill="#fff" stroke="#4a5d80"/></svg></button><button class="btn" aria-label="浏览视图"><svg width="9" height="8" viewBox="0 0 9 8"><path d="M.5.500h3v2h-3zM5.500.500h3v2h-3zM.5 5h3v2h-3zM5.500 5h3v2h-3z" fill="#fff" stroke="#34496f"/></svg></button><button class="btn" aria-label="放映"><svg width="9" height="9" viewBox="0 0 9 9"><path d="M0 .5h9M1.500 1v4h6V1M4.500 5v3M2.500 8.500h4" fill="none" stroke="#34496f"/></svg></button></div>
  <span class="zoomv ps-2">80%</span>
  <button class="btn" aria-label="适应窗口"><svg width="12" height="12" viewBox="0 0 12 12"><path d="M.5.500h11v11H.500z" fill="#f6f9fd" stroke="#55698d" stroke-dasharray="2 1"/><path d="M6 1v3M6 8v3M1 6h3M8 6h3" stroke="#333"/></svg></button>
</footer>

<!-- input method badge -->
<div class="ime d-flex">
  <svg width="24" height="26" viewBox="0 0 24 26"><path d="M13 4C8 0 2 5 2 13s6 12 12 10 9-8 8-14S14 1 13 4c-1 5 0 12-5 14-3 1-4-3-1-4 4-1 7 5 13 10M14 8c-1 6-2 13-7 14" fill="none" stroke="#22a3dc" stroke-width="1.300"/></svg>
  <div class="flex-fill"><div class="words d-flex"><span>连</span><span>接</span><span>高</span><span>校</span><span>和</span><span>社</span><span>会</span></div>
  <div class="d-flex justify-content-around align-items-center"><svg width="11" height="11" viewBox="0 0 11 11"><path d="M1 10l4.500-9L10 10M3 7h5" fill="none" stroke="#3d84c9" stroke-width="2"/></svg><svg width="10" height="10" viewBox="0 0 10 10"><path d="M6 0q5 5 0 8-3 2-6 0 6-1 6-8" fill="#3d84c9"/></svg><svg width="13" height="9" viewBox="0 0 13 9"><path d="M.5.500h12v8H.500z" fill="#cfe2f5" stroke="#3d84c9"/><path d="M2 3h9M2 5h9M4 7h5" stroke="#3d84c9" stroke-dasharray="1 1"/></svg><svg width="8" height="9" viewBox="0 0 8 9"><path d="M0 1h2v2H0zM5 5h2v2L5 9z" fill="#3d84c9"/></svg><svg width="11" height="11" viewBox="0 0 11 11"><path d="M1 10l5-5" stroke="#3d84c9" stroke-width="2.500"/><path d="M9 1L7 3l1 1 2-1q1 3-2 3T5 3t4-2" fill="#3d84c9"/></svg></div></div>
</div>

<div class="task d-flex flex-shrink-0">
  <div class="apps d-flex">
    <button class="btn" aria-label="开始"><svg width="12" height="12" viewBox="0 0 12 12"><path d="M0 2l5-1v4.500H0zM6 1l6-1v5.500H6zM0 6.500h5V11l-5-1zM6 6.500h6V12l-6-1z" fill="#fff"/></svg></button>
    <button class="btn" aria-label="Cortana"><svg width="12" height="12" viewBox="0 0 12 12"><circle cx="6" cy="6" r="4.500" fill="none" stroke="#fff" stroke-width="1.500"/></svg></button>
    <button class="btn" aria-label="任务视图"><svg width="15" height="11" viewBox="0 0 15 11"><path d="M3.500 1.500h8v8h-8zM2 2.500H.500v6H2M13 2.500h1.500v6H13" fill="none" stroke="#ddd"/></svg></button>
    <button class="btn" aria-label="WiFi"><svg width="17" height="17" viewBox="0 0 17 17"><circle cx="8.500" cy="8.500" r="8" fill="#49c12f"/><path d="M3.500 7q5-4 10 0M5.500 9.500q3-2.500 6 0" fill="none" stroke="#fff" stroke-width="1.600"/><circle cx="8.500" cy="12" r="1.300" fill="#fff"/></svg></button>
    <button class="btn run" aria-label="Camtasia"><svg width="17" height="17" viewBox="0 0 17 17"><circle cx="8" cy="8" r="7.500" fill="#5f9c26"/><path d="M11 2A6.500 6.500 0 0 0 8 14" fill="none" stroke="#e5f4cf" stroke-width="2"/><path d="M13 4a5 5 0 0 0-2 8" fill="none" stroke="#a8d670" stroke-width="2"/><path d="M12 10v3h4M15 10v6" stroke="#fff" fill="none"/></svg></button>
    <button class="btn run" aria-label="Firefox"><svg width="17" height="17" viewBox="0 0 17 17"><circle cx="8.500" cy="8.500" r="8" fill="#e8701a"/><path d="M4 5q1-4 6-4 4 2 3 8-3 4-6 2-4-1-3-6" fill="#1f5ca8"/><path d="M1 6q2-1 4 1l3 1-2 2q3 3 6 0 2-3 1-6 4 4 2 8-4 5-10 3Q0 12 1 6" fill="#f6912a"/></svg></button>
    <button class="btn" aria-label="Eclipse"><svg width="17" height="17" viewBox="0 0 17 17"><circle cx="8" cy="8.500" r="7.500" fill="#f0932b"/><circle cx="9.500" cy="8.500" r="7.500" fill="#2e2757"/><path d="M2 7h15M2 10h15" stroke="#dcd9ec" stroke-width="1.800"/></svg></button>
    <button class="btn" aria-label="云盘"><svg width="17" height="17" viewBox="0 0 17 17"><rect width="17" height="17" rx="2" fill="#3695e8"/><path d="M5 10.500a2.500 2.500 0 1 1 .5-5q3-3 5.500.500a2.300 2.300 0 1 1 0 4.500q-2 0-3-2L6.500 6.500M5 10.500q1.500 0 3-2" fill="none" stroke="#fff" stroke-width="1.100"/></svg></button>
    <button class="btn" aria-label="酷狗"><svg width="17" height="17" viewBox="0 0 17 17"><circle cx="8.500" cy="8.500" r="8" fill="#fff"/><circle cx="8.500" cy="8.500" r="7" fill="#1d93dc"/><path d="M6 4.500v8M11.500 4.500L7 8.500l4.500 4" fill="none" stroke="#fff" stroke-width="2"/></svg></button>
    <button class="btn" aria-label="QQ"><svg width="15" height="17" viewBox="0 0 15 17"><ellipse cx="7.500" cy="11" rx="5" ry="5" fill="#fff"/><circle cx="7.500" cy="5" r="4" fill="#222" stroke="#666" stroke-width=".5"/><circle cx="6" cy="4" r="1" fill="#fff"/><circle cx="9" cy="4" r="1" fill="#fff"/><path d="M5 6h5l-2 1.500H7z" fill="#f7a823"/><path d="M2 8q5.500 3 11 0v2q-5 3-11 0z" fill="#e02020"/><path d="M3 15h4v2H3zM8 15h4v2H8z" fill="#f7a823"/></svg></button>
    <button class="btn run" aria-label="计算机"><svg width="17" height="16" viewBox="0 0 17 16"><rect x="1" y="1" width="15" height="10" fill="#3b78b8" stroke="#9fb4c9"/><path d="M2 2h10L5 10H2z" fill="#6ba4da"/><path d="M6 12h5v2H6zM4 14h9v1H4z" fill="#cbd4dd"/></svg></button>
    <button class="btn run" aria-label="资源管理器"><svg width="17" height="15" viewBox="0 0 17 15"><path d="M1 1h5l1 1h9v12H1z" fill="#e9b949"/><path d="M1 4h15v10H1z" fill="#fbdc87"/><path d="M4 14V9h9v5h-2v-3H6v3z" fill="#3ea4d8"/></svg></button>
    <button class="btn run" aria-label="编辑器"><svg width="17" height="17" viewBox="0 0 17 17"><rect x="1" y="2" width="13" height="14" fill="#eef3ec" stroke="#777"/><path d="M1 9h13v7H1z" fill="#7cc242"/><path d="M4 5v5M6 7h4v3" stroke="#333" fill="none"/><path d="M15 1l2 1-7 11-1-1z" fill="#e9c33d"/></svg></button>
    <button class="btn run cur" aria-label="PowerPoint"><svg width="17" height="17" viewBox="0 0 17 17"><path d="M3 1h13l-1 15H1z" fill="#e9572b"/><path d="M4 2h11v2H4z" fill="#f6b29c"/><rect x="2" y="5" width="13" height="9" rx="1" fill="#fff"/><path d="M4 12V7h2.500q2 1.500 0 3H4" fill="none" stroke="#d5411c" stroke-width="1.400"/><path d="M13 7.500a2.200 2.200 0 1 0 0 4V9.500h-2" fill="none" stroke="#d5411c" stroke-width="1.300"/></svg></button>
    <button class="btn run" aria-label="记事本"><svg width="17" height="17" viewBox="0 0 17 17"><path d="M5 1h9l-3 13-10-1z" fill="#7cc3d3" stroke="#d8eef3"/><path d="M5 2h8l-1 5-8-1z" fill="#a9dce6"/><path d="M14 2l2 12-5 2z" fill="#c7d7db"/></svg></button>
  </div>
  <div class="tray d-flex align-items-center ms-auto">
    <svg width="10" height="7" viewBox="0 0 10 7"><path d="M1 6l4-4 4 4" fill="none" stroke="#fff" stroke-width="1.300"/></svg>
    <svg width="13" height="10" viewBox="0 0 13 10"><path d="M3.500 3.500h9v5h-9z" fill="none" stroke="#fff"/><path d="M5 5h5v2H5z" fill="#fff"/><path d="M1 1v3h2V1M2 4v4" stroke="#fff" fill="none"/></svg>
    <svg width="12" height="11" viewBox="0 0 12 11"><path d="M.5 4v3h2l3 2.500v-8L2.500 4zM7.500 4q1 1.500 0 3M9 2.500q2 3 0 6M10.500 1q3 4.500 0 9" fill="none" stroke="#fff"/></svg>
    <svg width="12" height="12" viewBox="0 0 12 12"><circle cx="6" cy="6" r="5.500" fill="#c9202b"/><path d="M9 3a3.500 3.500 0 1 0 0 6" fill="none" stroke="#fff" stroke-width="1.500"/></svg>
    <svg width="10" height="11" viewBox="0 0 10 11"><path d="M1 10l4-9 4 9M3 7h4" fill="none" stroke="#fff" stroke-width="1.300"/></svg>
    <svg class="ms-2" width="13" height="13" viewBox="0 0 13 13"><path d="M1 2l11-1-1 11-9 1z" fill="#f04a18"/><path d="M9.500 4Q4 2 4 5t4 2-4 3" fill="none" stroke="#fff" stroke-width="1.600"/></svg>
    <div class="clock"><div>19:25</div><div>2016/11/16</div></div>
  </div>
</div>
</body>
</html>
